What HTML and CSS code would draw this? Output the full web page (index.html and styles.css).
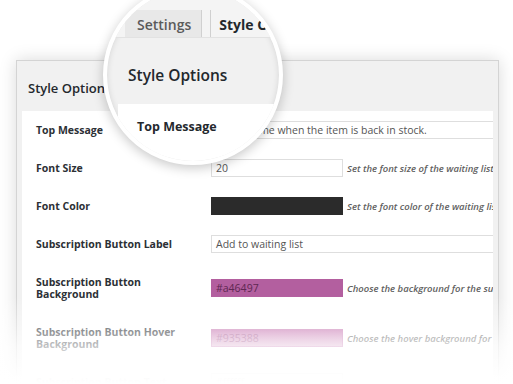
FILE: index.html
```html
<!DOCTYPE html>
<html lang="en">

<head>
    <meta charset="UTF-8">
    <meta name="viewport" content="width=device-width, initial-scale=1.0">
    <link rel="stylesheet" href="styles.css">
    <title>Style Options</title>
</head>

<body>
    <div class="stage">
        <div class="panel">
            <h2 class="panel-title">Style Options</h2>
            <div class="panel-body">
                <div class="row">
                    <span class="label">Top Message</span>
                    <span class="field">
                        <span class="input wide indent">Notify me when the item is back in stock.</span>
                    </span>
                </div>
                <div class="row">
                    <span class="label">Font Size</span>
                    <span class="field">
                        <span class="input short">20</span>
                        <span class="desc">Set the font size of the waiting list button text.</span>
                    </span>
                </div>
                <div class="row">
                    <span class="label">Font Color</span>
                    <span class="field">
                        <span class="input short swatch-dark"></span>
                        <span class="desc">Set the font color of the waiting list button text.</span>
                    </span>
                </div>
                <div class="row">
                    <span class="label">Subscription Button Label</span>
                    <span class="field">
                        <span class="input wide">Add to waiting list</span>
                    </span>
                </div>
                <div class="row">
                    <span class="label">Subscription Button Background</span>
                    <span class="field">
                        <span class="input short swatch-pink">#a46497</span>
                        <span class="desc">Choose the background for the subscription button.</span>
                    </span>
                </div>
                <div class="row">
                    <span class="label">Subscription Button Hover Background</span>
                    <span class="field">
                        <span class="input short swatch-hover">#935388</span>
                        <span class="desc">Choose the hover background for the subscription button.</span>
                    </span>
                </div>
                <div class="row">
                    <span class="label">Subscription Button Text</span>
                    <span class="field">
                        <span class="input short swatch-light">#ffffff</span>
                    </span>
                </div>
            </div>
        </div>

        <!-- magnifier glass over the tabs -->
        <div class="magnifier">
            <div class="mag-tabs">
                <span class="mag-tab">Settings</span>
                <span class="mag-tab active">Style Options</span>
            </div>
            <div class="mag-head">Style Options</div>
            <div class="mag-body">Top Message</div>
        </div>

        <div class="fade"></div>
    </div>
</body>

</html>
```

FILE: styles.css
```css
* {
    padding: 0;
    margin: 0;
    box-sizing: border-box;
}

body {
    width: 513px;
    height: 384px;
    overflow: hidden;
    background-color: #fff;
    font-family: "Open Sans", "Liberation Sans", sans-serif;
    color: #32373c;
}

.stage {
    position: relative;
    width: 513px;
    height: 384px;
    overflow: hidden;
}

.panel {
    margin: 60px 0 0 16px;
    width: 483px;
    height: 360px;
    border: 1px solid #d4d4d4;
    background-color: #f1f1f1;
    box-shadow: 0 0 16px rgba(0, 0, 0, 0.15);
}

.panel-title {
    font-size: 13px;
    font-weight: 600;
    line-height: 16px;
    color: #23282d;
    padding: 19px 0 15px 11px;
}

.panel-body {
    margin: 0 5px;
    background-color: #fff;
    height: 320px;
    overflow: hidden;
}

.row {
    display: flex;
    align-items: center;
    min-height: 38px;
}

.label {
    width: 189px;
    flex-shrink: 0;
    padding: 13px 20px 13px 14px;
    font-size: 10.5px;
    font-weight: 700;
    line-height: 12px;
    color: #2c3035;
}

.field {
    display: flex;
    align-items: center;
    gap: 4px;
    flex: 1;
    min-width: 0;
    white-space: nowrap;
    overflow: hidden;
}

.input {
    display: block;
    height: 18px;
    border: 1px solid #dedede;
    background-color: #fff;
    font-size: 10.5px;
    line-height: 16px;
    color: #555;
    padding-left: 4px;
    overflow: hidden;
    flex-shrink: 0;
}

.input.indent {
    padding-left: 15px;
}

.input.wide {
    width: 290px;
}

.input.short {
    width: 132px;
}

.swatch-dark {
    background-color: #2b2b2b;
    border-color: #2b2b2b;
}

.swatch-pink {
    background-color: #b35f9f;
    border-color: #b35f9f;
    color: #5e2752;
}

.swatch-hover {
    background: linear-gradient(#c879b3, #dcaacd);
    border-color: #c97db5;
    color: #a0518c;
}

.swatch-light {
    background-color: #fff;
}

.desc {
    font-size: 9.5px;
    font-style: italic;
    font-weight: 600;
    color: #5f5f5f;
}

/* magnifier */
.magnifier {
    position: absolute;
    left: 103px;
    top: -15px;
    width: 180px;
    height: 180px;
    border-radius: 50%;
    border: 4px solid #fff;
    overflow: hidden;
    background-color: #f1f1f1;
    box-shadow: 0 3px 12px rgba(0, 0, 0, 0.22), inset 0 0 6px rgba(0, 0, 0, 0.12);
}

.mag-tabs {
    display: flex;
    align-items: flex-end;
    height: 49px;
    padding-left: 18px;
    background-color: #f4f4f4;
    border-bottom: 1px solid #e2e2e2;
}

.mag-tab {
    height: 27px;
    padding: 2px 10px 0 12px;
    font-size: 14px;
    font-weight: 600;
    line-height: 26px;
    color: #5a5a5a;
    background-color: #e8e8e8;
    border-right: 1px solid #d0d0d0;
    white-space: nowrap;
}

.mag-tab.active {
    margin-left: 8px;
    padding-left: 8px;
    color: #23282d;
    font-weight: 700;
    background-color: #f4f4f4;
    border-left: 1px solid #d0d0d0;
    border-right: none;
}

.mag-head {
    height: 66px;
    padding: 28px 0 0 21px;
    font-size: 15.5px;
    font-weight: 600;
    line-height: 18px;
    color: #23282d;
}

.mag-body {
    margin-left: 11px;
    height: 80px;
    background-color: #fff;
    padding: 15px 0 0 19px;
    font-size: 12.5px;
    font-weight: 700;
    line-height: 16px;
    color: #23282d;
}

.fade {
    position: absolute;
    left: 0;
    top: 296px;
    width: 513px;
    height: 88px;
    background: linear-gradient(rgba(255, 255, 255, 0) 0%, rgba(255, 255, 255, 0.45) 38%,
        rgba(255, 255, 255, 0.72) 58%, rgba(255, 255, 255, 0.98) 92%, #fff 100%);
}
```
